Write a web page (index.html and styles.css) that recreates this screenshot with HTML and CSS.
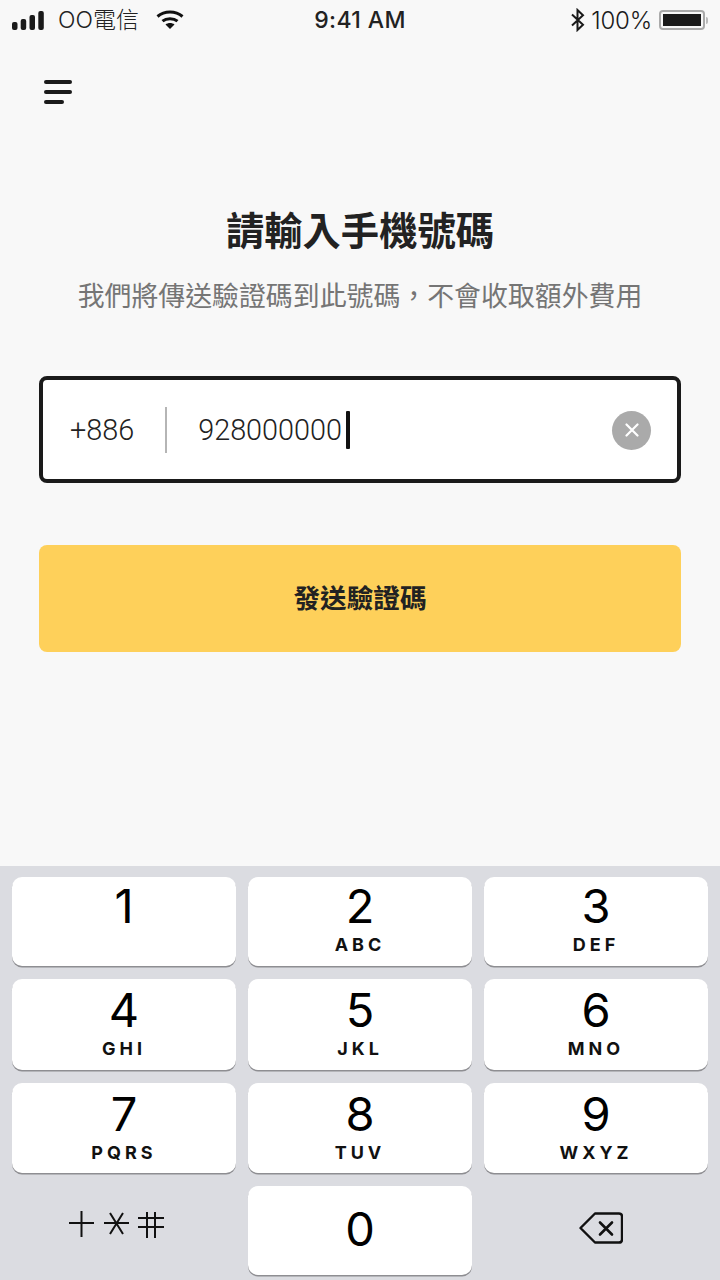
FILE: index.html
```html
<!DOCTYPE html>
<html lang="zh-Hant">
<head>
<meta charset="utf-8">
<title>請輸入手機號碼</title>
<link rel="stylesheet" href="styles.css">
</head>
<body>
<div class="screen">
  <header class="status">
    <div class="status-left">
      <svg class="signal" width="32" height="20" viewBox="0 0 32 20"><rect x="0" y="11" width="5.500" height="8" rx="2"/><rect x="8.700" y="8" width="5.500" height="11" rx="2"/><rect x="17.500" y="4" width="5.500" height="15" rx="2"/><rect x="26.300" y="0" width="5.500" height="19" rx="2"/></svg>
      <span class="carrier">OO電信</span>
      <svg class="wifi" width="28" height="20" viewBox="0 0 28 20"><path d="M1.500 6.500C8.500 0.500 19.500 0.500 26.500 6.500" fill="none" stroke="#111" stroke-width="3"/><path d="M6.500 11.200C10.500 7.800 17.500 7.800 21.500 11.200" fill="none" stroke="#111" stroke-width="3"/><path d="M9.500 14.500C12 12.500 16 12.500 18.500 14.500L14 19Z" fill="#111"/></svg>
    </div>
    <div class="status-time">9:41 AM</div>
    <div class="status-right">
      <svg class="bt" width="16" height="24" viewBox="0 0 16 24"><path d="M2 6.500L13 16.800L7.500 22V2L13 7.200L2 17.500" fill="none" stroke="#1a1a1a" stroke-width="2"/></svg>
      <span class="battery-text">100%</span>
      <span class="battery"><span class="battery-fill"></span></span>
      <span class="battery-tip"></span>
    </div>
  </header>

  <main class="content">
    <button class="menu" aria-label="menu">
      <span class="menu-line"></span>
      <span class="menu-line"></span>
      <span class="menu-line menu-line-short"></span>
    </button>
    <h1 class="title">請輸入手機號碼</h1>
    <p class="subtitle">我們將傳送驗證碼到此號碼，不會收取額外費用</p>
    <div class="field">
      <span class="code">+886</span>
      <span class="divider"></span>
      <span class="number">928000000</span>
      <span class="caret"></span>
      <span class="clear">
        <svg width="14" height="14" viewBox="0 0 14 14"><path d="M1.500 1.500L12.500 12.500M12.500 1.500L1.500 12.500" stroke="#fff" stroke-width="2.200" stroke-linecap="round"/></svg>
      </span>
    </div>
    <button class="send">發送驗證碼</button>
  </main>

  <section class="keyboard">
    <div class="key"><span class="digit">1</span></div>
    <div class="key"><span class="digit">2</span><span class="letters">ABC</span></div>
    <div class="key"><span class="digit">3</span><span class="letters">DEF</span></div>
    <div class="key key-low"><span class="digit">4</span><span class="letters">GHI</span></div>
    <div class="key key-low"><span class="digit">5</span><span class="letters">JKL</span></div>
    <div class="key key-low"><span class="digit">6</span><span class="letters">MNO</span></div>
    <div class="key key-low"><span class="digit">7</span><span class="letters">PQRS</span></div>
    <div class="key key-low"><span class="digit">8</span><span class="letters">TUV</span></div>
    <div class="key key-low"><span class="digit">9</span><span class="letters">WXYZ</span></div>
    <div class="key key-flat key-symbols">
      <svg width="95" height="28" viewBox="0 0 95 28"><g stroke="#111" stroke-width="2" fill="none"><path d="M0 13H25M12.500 1V27"/><path d="M35 13H60M41 3L54 24M54 3L41 24"/><path d="M69 8H95M69 17H95M78 2V28M86 2V28"/></g></svg>
    </div>
    <div class="key key-zero"><span class="digit">0</span></div>
    <div class="key key-flat key-delete">
      <svg width="44" height="32" viewBox="0 0 44 32"><path d="M16 1.500H40Q43 1.500 43 4.500V27.500Q43 30.500 40 30.500H16L1.500 16Z" fill="none" stroke="#111" stroke-width="2.400" stroke-linejoin="round"/><path d="M21 10.500L33 22.500M33 10.500L21 22.500" stroke="#111" stroke-width="2.600" stroke-linecap="round"/></svg>
    </div>
  </section>
</div>
</body>
</html>
```

FILE: styles.css
```css
* {
  box-sizing: border-box;
}

html,
body {
  margin: 0;
  padding: 0;
}

body {
  font-family: Inter, "Noto Sans CJK TC", sans-serif;
  color: #1a1a1a;
  background: #f8f8f8;
}

.screen {
  width: 720px;
  height: 1280px;
  display: flex;
  flex-direction: column;
  overflow: hidden;
}

.status {
  height: 40px;
  padding: 0 12px;
  display: grid;
  grid-template-columns: 1fr auto 1fr;
  align-items: center;
}

.status-left {
  display: flex;
  align-items: center;
}

.signal {
  fill: #1a1a1a;
  margin-top: 1px;
}

.carrier {
  margin-left: 14px;
  font-size: 23px;
  font-weight: 300;
  color: #222;
  line-height: 40px;
}

.wifi {
  margin-left: 17px;
  margin-top: -1px;
}

.status-time {
  font-size: 23px;
  font-weight: 500;
  color: #222;
  letter-spacing: 0.4px;
}

.status-right {
  display: flex;
  align-items: center;
  justify-content: flex-end;
  margin-right: 0;
}

.bt {
  margin-right: 5px;
}

.battery-text {
  font-size: 24px;
  font-weight: 300;
  letter-spacing: -0.2px;
  margin-right: 7px;
}

.battery {
  width: 46px;
  height: 20px;
  padding: 2px;
  border: 2px solid #aaa;
  border-radius: 4px;
  display: block;
}

.battery-fill {
  display: block;
  width: 100%;
  height: 100%;
  background: #1a1a1a;
}

.battery-tip {
  width: 2px;
  height: 7px;
  margin-left: 1px;
  background: #bbb;
  border-radius: 0 2px 2px 0;
}

.content {
  flex: 1;
  padding: 40px 39px 0;
  display: flex;
  flex-direction: column;
}

.menu {
  width: 28px;
  height: 24px;
  margin-left: 5px;
  padding: 0;
  border: 0;
  background: none;
  display: flex;
  flex-direction: column;
  gap: 6px;
}

.menu-line {
  display: block;
  width: 28px;
  height: 4px;
  border-radius: 2px;
  background: #1a1a1a;
}

.menu-line-short {
  width: 20px;
}

.title {
  margin: 100px 0 0;
  text-align: center;
  font-size: 38.300px;
  line-height: 54px;
  font-weight: 700;
  color: #222;
}

.subtitle {
  margin: 19px 0 0;
  text-align: center;
  font-size: 26.900px;
  line-height: 38px;
  font-weight: 400;
  color: #757575;
  white-space: nowrap;
}

.field {
  margin-top: 61px;
  height: 107px;
  padding: 0 26px 0 27px;
  display: flex;
  align-items: center;
  background: #fff;
  border: 4px solid #1a1a1a;
  border-radius: 8px;
}

.code,
.number {
  font-family: Roboto, sans-serif;
  font-size: 28.800px;
  font-weight: 300;
  color: #222;
  padding-top: 1px;
}

.divider {
  width: 2px;
  height: 46px;
  margin: 0 31px;
  background: #b5b5b5;
}

.caret {
  width: 4px;
  height: 38px;
  margin-left: 4px;
  background: #111;
  border-radius: 1px;
}

.clear {
  margin-left: auto;
  margin-top: 1px;
  width: 39px;
  height: 39px;
  border-radius: 50%;
  background: #aaa;
  display: flex;
  align-items: center;
  justify-content: center;
}

.send {
  margin-top: 62px;
  height: 107px;
  border: 0;
  padding: 0 0 4px;
  border-radius: 8px;
  background: #fed05a;
  font-family: "Noto Sans CJK TC", sans-serif;
  font-size: 26.600px;
  font-weight: 700;
  color: #222;
}

.keyboard {
  height: 414px;
  padding: 11px 12px 0;
  background: #dbdce1;
  display: grid;
  grid-template-columns: repeat(3, 1fr);
  grid-template-rows: 89px 91px 90px 89px;
  column-gap: 12px;
  row-gap: 13px;
}

.key {
  background: #fff;
  border-radius: 10px;
  box-shadow: 0 1.500px 0 #8e8e92;
  display: flex;
  flex-direction: column;
  align-items: center;
  color: #000;
}

.key-low {
  padding-top: 2px;
}

.digit {
  font-size: 47px;
  font-weight: 370;
  line-height: 58px;
}

.letters {
  font-size: 18px;
  font-weight: 700;
  letter-spacing: 4px;
  line-height: 22px;
  margin-top: -1px;
  color: #111;
}

.key-flat {
  background: none;
  box-shadow: none;
  justify-content: center;
}

.key-symbols {
  padding: 0 15px 13px 0;
}

.key-delete {
  padding: 0 0 5px 9px;
}

.key-zero .digit {
  margin-top: 14px;
}
```
